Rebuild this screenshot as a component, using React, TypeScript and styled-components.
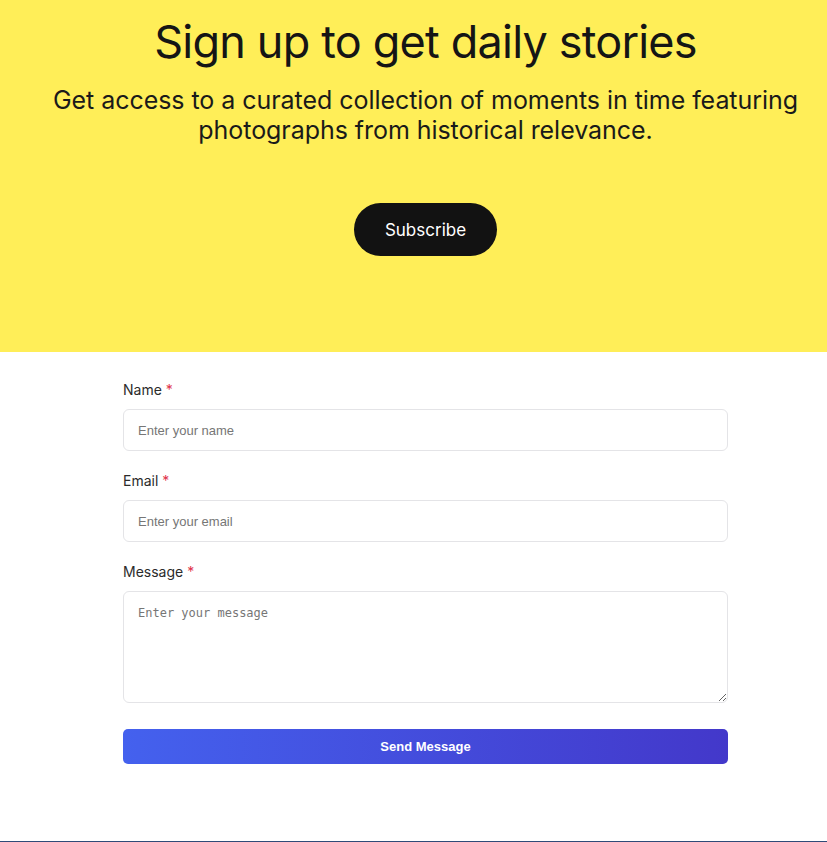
import styled, { createGlobalStyle } from "styled-components";

const GlobalStyle = createGlobalStyle`
  html, body {
    margin: 0;
    padding: 0;
    background: #ffffff;
  }

  body {
    font-family: Inter, "Noto Sans", sans-serif;
    color: #111111;
  }

  * {
    box-sizing: border-box;
  }
`;

const Hero = styled.section`
  background: #ffee58;
  height: 352px;
  padding: 14px 0 0 24px;
  display: flex;
  flex-direction: column;
  align-items: center;
  text-align: center;
`;

const Title = styled.h1`
  margin: 0;
  font-family: Inter, sans-serif;
  font-size: 45px;
  font-weight: 400;
  line-height: 56px;
  letter-spacing: -0.8px;
  color: #151515;
`;

const Lead = styled.p`
  margin: 15px 0 0;
  max-width: 780px;
  font-family: Inter, sans-serif;
  font-size: 25px;
  font-weight: 400;
  line-height: 30px;
  letter-spacing: -0.05px;
  color: #1a1a1a;
`;

const SubscribeButton = styled.button`
  margin-top: 58px;
  height: 53px;
  padding: 0 31px;
  border: none;
  border-radius: 27px;
  background: #121212;
  color: #ffffff;
  font-family: Inter, sans-serif;
  font-size: 17px;
  font-weight: 400;
  cursor: pointer;
`;

const FormSection = styled.section`
  height: 489px;
  padding: 28px 0 0 24px;
  display: flex;
  justify-content: center;
`;

const Form = styled.form`
  width: 605px;
  display: flex;
  flex-direction: column;
`;

const Field = styled.div`
  display: flex;
  flex-direction: column;
  margin-bottom: 20px;
`;

const Label = styled.label`
  font-family: Inter, sans-serif;
  font-size: 14px;
  line-height: 20px;
  color: #2b2b2b;
  margin-bottom: 9px;
`;

const Required = styled.span`
  color: #e0344a;
  margin-left: 4px;
`;

const Input = styled.input`
  width: 100%;
  height: 42px;
  padding: 0 14px;
  border: 1px solid #e4e4e7;
  border-radius: 6px;
  font-family: "Liberation Sans", Arial, sans-serif;
  font-size: 13px;
  color: #222;
  background: #fff;
  outline: none;

  &::placeholder {
    color: #767676;
  }
`;

const TextArea = styled.textarea`
  display: block;
  width: 100%;
  height: 112px;
  padding: 13px 14px;
  border: 1px solid #e4e4e7;
  border-radius: 6px;
  font-family: "DejaVu Sans Mono", monospace;
  font-size: 12px;
  line-height: 16px;
  color: #222;
  background: #fff;
  outline: none;

  &::placeholder {
    color: #767676;
  }
`;

const SendButton = styled.button`
  margin-top: 6px;
  width: 100%;
  height: 35px;
  border: none;
  border-radius: 5px;
  background: linear-gradient(90deg, #4461ee 0%, #4338ca 100%);
  color: #ffffff;
  font-family: "Liberation Sans", Arial, sans-serif;
  font-size: 13px;
  font-weight: 700;
  cursor: pointer;
`;

const Footer = styled.footer`
  height: 40px;
  border-top: 1px solid #2f4a78;
  background: #ffffff;
`;

export default function App() {
  return (
    <>
      <GlobalStyle />
      <Hero>
        <Title>Sign up to get daily stories</Title>
        <Lead>
          Get access to a curated collection of moments in time featuring
          photographs from historical relevance.
        </Lead>
        <SubscribeButton type="button">Subscribe</SubscribeButton>
      </Hero>

      <FormSection>
        <Form onSubmit={(e) => e.preventDefault()}>
          <Field>
            <Label htmlFor="name">
              Name<Required>*</Required>
            </Label>
            <Input id="name" type="text" placeholder="Enter your name" />
          </Field>
          <Field>
            <Label htmlFor="email">
              Email<Required>*</Required>
            </Label>
            <Input id="email" type="email" placeholder="Enter your email" />
          </Field>
          <Field>
            <Label htmlFor="message">
              Message<Required>*</Required>
            </Label>
            <TextArea id="message" placeholder="Enter your message" />
          </Field>
          <SendButton type="submit">Send Message</SendButton>
        </Form>
      </FormSection>

      <Footer />
    </>
  );
}
